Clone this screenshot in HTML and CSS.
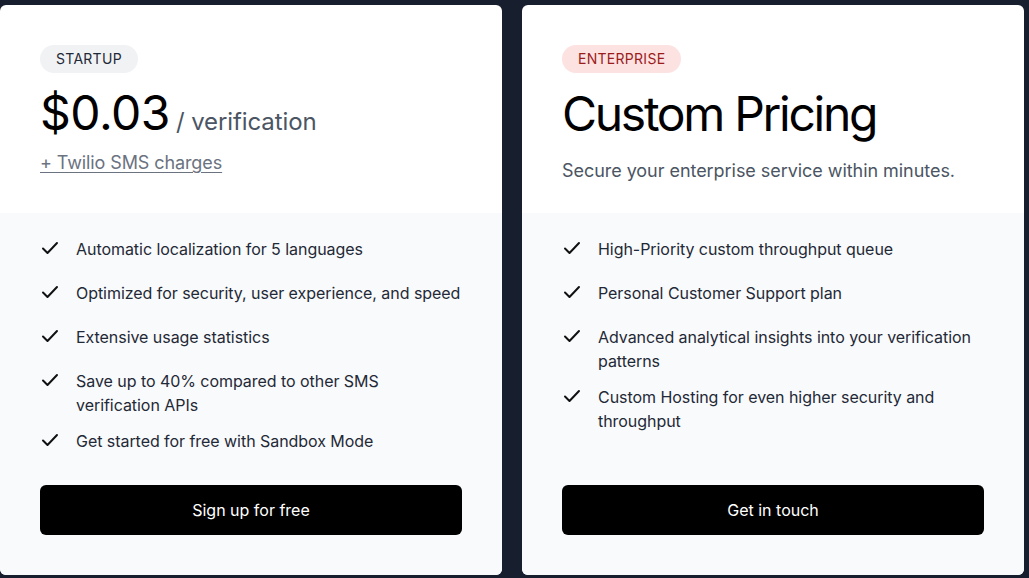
FILE: index.html
```html
<!DOCTYPE html>
<html lang="en">
<head>
<meta charset="utf-8">
<link rel="stylesheet" href="styles.css">
</head>
<body>
<main class="plans">
  <section class="card">
    <div class="card-top">
      <span class="badge badge--gray">Startup</span>
      <div class="price-row">
        <span class="price">$0.03</span>
        <span class="per">/ verification</span>
      </div>
      <a class="extra" href="#">+ Twilio SMS charges</a>
    </div>
    <div class="card-bottom">
      <ul class="features">
        <li><svg class="check" viewBox="0 0 24 24"><path d="M3 11.5l4.5 4.5L17 6"/></svg><span>Automatic localization for 5 languages</span></li>
        <li><svg class="check" viewBox="0 0 24 24"><path d="M3 11.5l4.5 4.5L17 6"/></svg><span>Optimized for security, user experience, and speed</span></li>
        <li><svg class="check" viewBox="0 0 24 24"><path d="M3 11.5l4.5 4.5L17 6"/></svg><span>Extensive usage statistics</span></li>
        <li><svg class="check" viewBox="0 0 24 24"><path d="M3 11.5l4.5 4.5L17 6"/></svg><span>Save up to 40% compared to other SMS verification APIs</span></li>
        <li><svg class="check" viewBox="0 0 24 24"><path d="M3 11.5l4.5 4.5L17 6"/></svg><span>Get started for free with Sandbox Mode</span></li>
      </ul>
      <a class="btn" href="#">Sign up for free</a>
    </div>
  </section>
  <section class="card">
    <div class="card-top">
      <span class="badge badge--red">Enterprise</span>
      <h2 class="title">Custom Pricing</h2>
      <p class="desc">Secure your enterprise service within minutes.</p>
    </div>
    <div class="card-bottom">
      <ul class="features">
        <li><svg class="check" viewBox="0 0 24 24"><path d="M3 11.5l4.5 4.5L17 6"/></svg><span>High-Priority custom throughput queue</span></li>
        <li><svg class="check" viewBox="0 0 24 24"><path d="M3 11.5l4.5 4.5L17 6"/></svg><span>Personal Customer Support plan</span></li>
        <li><svg class="check" viewBox="0 0 24 24"><path d="M3 11.5l4.5 4.5L17 6"/></svg><span>Advanced analytical insights into your verification patterns</span></li>
        <li><svg class="check" viewBox="0 0 24 24"><path d="M3 11.5l4.5 4.5L17 6"/></svg><span>Custom Hosting for even higher security and throughput</span></li>
      </ul>
      <a class="btn" href="#">Get in touch</a>
    </div>
  </section>
</main>
</body>
</html>
```
FILE: styles.css
```css
* { box-sizing: border-box; }
html, body { margin: 0; padding: 0; }
body {
  background: #171e2d;
  font-family: Inter, "Noto Sans", sans-serif;
  color: #1f2937;
  width: 1029px;
  height: 578px;
  overflow: hidden;
}
.plans {
  display: grid;
  grid-template-columns: 502px 502px;
  column-gap: 20px;
  padding: 5px 5px 3px 0;
  height: 578px;
}
.card {
  background: #fff;
  border-radius: 6px;
  overflow: hidden;
  display: flex;
  flex-direction: column;
}
.card-top {
  height: 208px;
  padding: 40px 40px 0;
  display: flex;
  flex-direction: column;
  align-items: flex-start;
}
.badge {
  display: inline-block;
  padding: 4px 16px;
  border-radius: 9999px;
  font-size: 14px;
  line-height: 20px;
  letter-spacing: 0.02em;
  text-transform: uppercase;
}
.badge--gray { background: #f1f2f4; color: #1f2937; }
.badge--red { background: #fde2e2; color: #9b1c1c; }
.price-row {
  margin-top: 16px;
  display: flex;
  align-items: baseline;
}
.price {
  font-size: 48px;
  line-height: 1;
  color: #000;
  letter-spacing: -0.01em;
}
.per {
  margin-left: 6px;
  font-size: 24px;
  line-height: 32px;
  color: #4b5563;
  letter-spacing: -0.1px;
}
.extra {
  margin-top: 11px;
  font-size: 18px;
  line-height: 28px;
  color: #6b7280;
  text-decoration: underline;
  text-underline-offset: 3px;
  letter-spacing: -0.1px;
}
.title {
  margin: 17px 0 0;
  font-size: 48px;
  line-height: 1;
  font-weight: 400;
  color: #000;
  letter-spacing: -2.3px;
}
.desc {
  margin: 19px 0 0;
  font-size: 18px;
  line-height: 28px;
  color: #4b5563;
  letter-spacing: -0.05px;
}
.card-bottom {
  flex: 1;
  background: #f9fafb;
  padding: 24px 40px 40px;
  display: flex;
  flex-direction: column;
}
.features {
  list-style: none;
  margin: 0;
  padding: 0;
  display: flex;
  flex-direction: column;
  gap: 12px;
}
.features li {
  display: flex;
  align-items: flex-start;
  gap: 12px;
  min-height: 32px;
  font-size: 16px;
  line-height: 24px;
  color: #1f2937;
  letter-spacing: -0.05px;
}
.check {
  flex: none;
  width: 24px;
  height: 24px;
  fill: none;
  stroke: #111;
  stroke-width: 2;
  stroke-linecap: round;
  stroke-linejoin: round;
}
.btn {
  margin-top: auto;
  display: flex;
  align-items: center;
  justify-content: center;
  height: 50px;
  border-radius: 6px;
  background: #000;
  color: #fff;
  font-size: 16px;
  text-decoration: none;
}
```
